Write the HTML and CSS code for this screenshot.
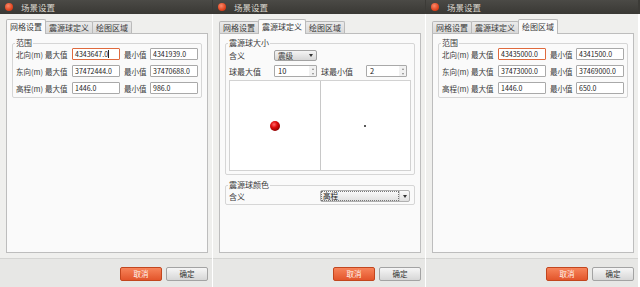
FILE: index.html
```html
<!DOCTYPE html>
<html lang="zh-CN">
<head>
<meta charset="utf-8">
<title>场景设置</title>
<link rel="stylesheet" href="styles.css">
</head>
<body>
<div class="screen">

  <div class="win">
    <div class="titlebar"><span class="close"></span><span class="title">场景设置</span></div>
    <div class="client">
      <div class="tabs">
        <div class="tab active">网格设置</div>
        <div class="tab">震源球定义</div>
        <div class="tab">绘图区域</div>
      </div>
      <div class="panel">
        <fieldset class="group">
          <legend>范围</legend>
          <div class="range">
            <span>北向(m)</span><span>最大值</span><div class="input focus">4343647.0<span class="caret"></span></div><span class="lbl2">最小值</span><div class="input">4341939.0</div>
            <span>东向(m)</span><span>最大值</span><div class="input">37472444.0</div><span class="lbl2">最小值</span><div class="input">37470688.0</div>
            <span>高程(m)</span><span>最大值</span><div class="input">1446.0</div><span class="lbl2">最小值</span><div class="input">986.0</div>
          </div>
        </fieldset>
      </div>
      <div class="footer">
        <div class="btn cancel">取消</div>
        <div class="btn ok">确定</div>
      </div>
    </div>
  </div>

  <div class="win">
    <div class="titlebar"><span class="close"></span><span class="title">场景设置</span></div>
    <div class="client">
      <div class="tabs">
        <div class="tab">网格设置</div>
        <div class="tab active">震源球定义</div>
        <div class="tab">绘图区域</div>
      </div>
      <div class="panel">
        <fieldset class="group">
          <legend>震源球大小</legend>
          <div class="size-grid">
            <span>含义</span><div class="combo"><span>震级</span><span class="arrow"></span></div><span></span><span></span>
            <span>球最大值</span><div class="spin"><span class="val">10</span><span class="btns"><i class="up"></i><i class="down"></i></span></div>
            <span class="lbl2">球最小值</span><div class="spin"><span class="val">2</span><span class="btns"><i class="up"></i><i class="down"></i></span></div>
          </div>
          <div class="preview">
            <div class="half"><span class="ball"></span></div>
            <div class="half"><span class="dot"></span></div>
          </div>
        </fieldset>
        <fieldset class="group color-group">
          <legend>震源球颜色</legend>
          <div class="color-row">
            <span>含义</span>
            <div class="combo light"><span class="cval">高程</span><span class="abox"><span class="arrow"></span></span></div>
          </div>
        </fieldset>
      </div>
      <div class="footer">
        <div class="btn cancel">取消</div>
        <div class="btn ok">确定</div>
      </div>
    </div>
  </div>

  <div class="win">
    <div class="titlebar"><span class="close"></span><span class="title">场景设置</span></div>
    <div class="client">
      <div class="tabs">
        <div class="tab">网格设置</div>
        <div class="tab">震源球定义</div>
        <div class="tab active">绘图区域</div>
      </div>
      <div class="panel">
        <fieldset class="group">
          <legend>范围</legend>
          <div class="range">
            <span>北向(m)</span><span>最大值</span><div class="input focus">43435000.0</div><span class="lbl2">最小值</span><div class="input">4341500.0</div>
            <span>东向(m)</span><span>最大值</span><div class="input">37473000.0</div><span class="lbl2">最小值</span><div class="input">37469000.0</div>
            <span>高程(m)</span><span>最大值</span><div class="input">1446.0</div><span class="lbl2">最小值</span><div class="input">650.0</div>
          </div>
        </fieldset>
      </div>
      <div class="footer">
        <div class="btn cancel">取消</div>
        <div class="btn ok">确定</div>
      </div>
    </div>
  </div>

</div>
</body>
</html>
```
FILE: styles.css
```css
* { box-sizing: border-box; }
html, body { margin: 0; padding: 0; }
body {
  width: 640px;
  height: 287px;
  overflow: hidden;
  background: #ffffff;
  font-family: "Noto Sans CJK SC", "Noto Sans", sans-serif;
  font-size: 8px;
  color: #3a3a3a;
}
.screen {
  display: flex;
  gap: 1px;
  height: 287px;
  background: linear-gradient(#3c3b37 0 14px, #ffffff 14px);
}
.win {
  width: 212px;
  height: 287px;
  display: flex;
  flex-direction: column;
}
.titlebar {
  height: 14px;
  flex: none;
  background: linear-gradient(#4b4a46, #393834);
  display: flex;
  align-items: center;
  padding-left: 5px;
  gap: 8px;
  color: #dcd8cf;
  font-size: 8.5px;
  line-height: 14px;
}
.close {
  width: 8px;
  height: 8px;
  border-radius: 50%;
  background: radial-gradient(circle at 40% 35%, #f98a6c, #e2451f 60%, #b12c10);
}
.client {
  flex: 1;
  background: #efefed;
  display: flex;
  flex-direction: column;
  padding-top: 6px;
}
.tabs {
  display: flex;
  align-items: flex-end;
  height: 13px;
  padding-left: 6px;
  position: relative;
  z-index: 1;
}
.tab {
  height: 12px;
  padding: 0 3px;
  border: 1px solid #bababa;
  border-bottom: none;
  border-radius: 2px 2px 0 0;
  background: linear-gradient(#ebebeb, #d9d9d9);
  line-height: 11px;
  margin-right: -1px;
  color: #3a3a3a;
}
.tab.active {
  height: 15px;
  margin-bottom: -1px;
  background: #fafafa;
  line-height: 13px;
}
.panel {
  flex: 1;
  margin: 0 4px 0 6px;
  border: 1px solid #bdbdbd;
  background: #fafafa;
  padding: 4px 5px 0 5px;
}
.group {
  margin: 0;
  border: 1px solid #d6d6d6;
  border-radius: 2px;
  padding: 0 3px 3px 3px;
  min-width: 0;
}
.group legend {
  padding: 0 1px;
  margin-left: -1px;
  line-height: 10px;
}
.range {
  display: grid;
  grid-template-columns: 29px 27px 48px 30px 48px;
  grid-auto-rows: 12px;
  row-gap: 5px;
  align-items: center;
  font-size: 7.5px;
}
.lbl2 { padding-left: 4px; }
.input {
  height: 12px;
  border: 1px solid #a9a9a9;
  border-radius: 1px;
  background: #ffffff;
  padding: 0 2px;
  font-size: 7px;
  line-height: 10px;
  color: #222;
  display: flex;
  align-items: center;
}
.input.focus { border-color: #df6a3e; }
.caret {
  width: 1px;
  height: 8px;
  background: #222;
}
.footer {
  flex: none;
  height: 29px;
  margin-top: 5px;
  border-top: 1px solid #d4d4d2;
  background: #e7e7e5;
  display: flex;
  justify-content: flex-end;
  align-items: flex-start;
  gap: 4px;
  padding: 8px 4px 0 0;
}
.btn {
  width: 42px;
  height: 14px;
  border-radius: 2px;
  font-size: 7.5px;
  line-height: 12px;
  text-align: center;
}
.btn.cancel {
  border: 1px solid #c2461e;
  background: linear-gradient(#f7845a, #e3552b);
  color: #fff3ee;
}
.btn.ok {
  border: 1px solid #a3a3a3;
  background: linear-gradient(#f6f6f6, #d6d6d6);
  color: #333;
}
.size-grid {
  display: grid;
  grid-template-columns: 45px 43px 49px 41px;
  grid-template-rows: 11px 12px;
  row-gap: 4px;
  align-items: center;
  margin-top: 2px;
}
.combo {
  height: 11px;
  border: 1px solid #a2a2a2;
  border-radius: 2px;
  background: linear-gradient(#f5f5f5, #d6d6d6);
  display: flex;
  justify-content: space-between;
  align-items: center;
  padding: 0 3px;
  font-size: 7.5px;
  line-height: 9px;
}
.arrow {
  width: 0;
  height: 0;
  border-top: 3px solid #333;
  border-left: 2.5px solid transparent;
  border-right: 2.5px solid transparent;
}
.spin {
  height: 12px;
  border: 1px solid #a9a9a9;
  border-radius: 1px;
  background: #fff;
  display: flex;
  font-size: 7.5px;
  line-height: 10px;
}
.spin .val { flex: 1; padding-left: 3px; color: #222; }
.spin .btns {
  width: 7px;
  display: flex;
  flex-direction: column;
  justify-content: space-around;
  align-items: center;
  background: #f1f1f1;
}
.spin i { display: block; width: 0; height: 0; border-left: 1.5px solid transparent; border-right: 1.5px solid transparent; }
.spin i.up { border-bottom: 2px solid #888; }
.spin i.down { border-top: 2px solid #888; }
.preview {
  margin-top: 3px;
  height: 91px;
  border: 1px solid #d2d2d2;
  background: #ffffff;
  display: flex;
}
.half {
  flex: 1;
  display: flex;
  align-items: center;
  justify-content: center;
}
.half + .half { border-left: 1px solid #c8c8c8; }
.ball {
  width: 10px;
  height: 10px;
  border-radius: 50%;
  background: radial-gradient(circle at 40% 35%, #ff6a6a 0, #e00c0c 35%, #8e0000 75%, #400000 100%);
}
.dot {
  width: 2px;
  height: 2px;
  border-radius: 50%;
  background: #222;
}
.color-group { margin-top: 5px; padding-bottom: 2px; }
.color-row {
  display: grid;
  grid-template-columns: 91px 90px;
  align-items: center;
}
.combo.light {
  height: 12px;
  padding: 0;
  background: linear-gradient(#fbfbfb, #e0e0e0);
  border-color: #b0b0b0;
}
.combo.light .cval {
  flex: 1;
  height: 10px;
  border: 1px dotted #777;
  padding-left: 1px;
  line-height: 8px;
  color: #222;
}
.combo.light .abox {
  width: 10px;
  display: flex;
  justify-content: center;
  align-items: center;
  border-left: 1px solid #d0d0d0;
  height: 10px;
}
```
